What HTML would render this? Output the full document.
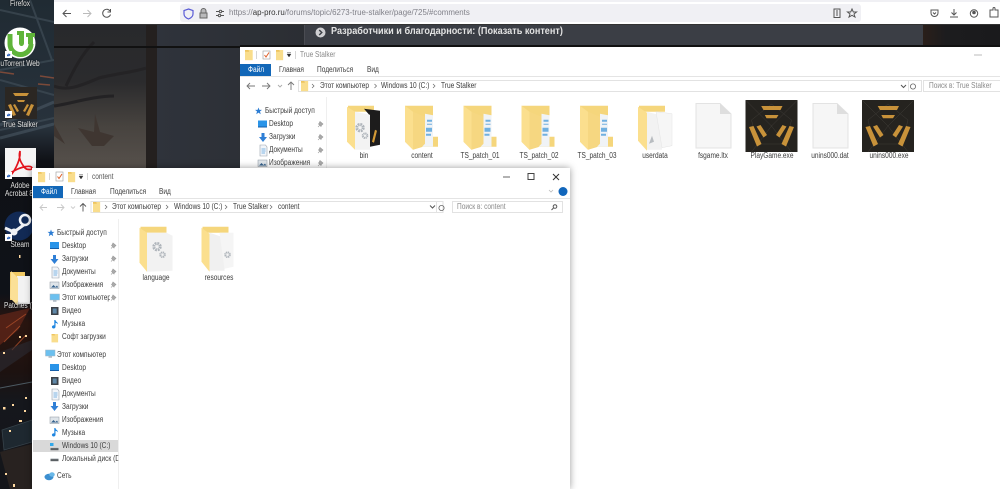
<!DOCTYPE html>
<html><head><meta charset="utf-8"><title>True Stalker</title>
<style>
html,body{margin:0;padding:0;width:1000px;height:489px;overflow:hidden;background:#fff}
#r{position:relative;width:1000px;height:489px;overflow:hidden;font-family:"Liberation Sans",sans-serif;filter:blur(.35px)}
.a{position:absolute}
.t{position:absolute;white-space:nowrap;font-size:7.8px;line-height:10px;height:10px;color:#3c3c3c;transform:scaleX(.84);transform-origin:0 50%}
.c{transform:translateX(-50%) scaleX(.84);transform-origin:50% 50%}
.d{color:#e4e4e4;text-shadow:0 0 2px #000}
.g{color:#8a8a8a}
svg{position:absolute;display:block;overflow:visible}
</style></head><body><div id="r">
<svg width="0" height="0" style="left:0;top:0">
<defs>
<g id="gear"><circle cx="0" cy="0" r="3.200" fill="none" stroke="#aeb4ba" stroke-width="3" stroke-dasharray="1.700 .8"/></g>
<g id="fc"><path d="M1 0H28V31H33V41H18L8 44L0 36V0Z" fill="#f5d67c"/><path d="M8 6L20 11V39L8 44Z" fill="#f6d781"/><path d="M20 8L28 9.500V41H17L20 38Z" fill="#f0f3f6"/><path d="M22 14H27V16H22ZM22 18H27V19H22ZM21 22H27V26H21ZM21 28H26V30H21Z" fill="#59a3dc" opacity=".85"/><path d="M0 0L8 6V44L0 36Z" fill="#fbdf8e"/></g>
<g id="fg"><path d="M1 0H27V6H1Z" fill="#f5d67c"/><path d="M7 6H27L33 9V44L7 45Z" fill="#f2f2f2"/><use href="#gear" x="17.500" y="20"/><use href="#gear" transform="translate(23 28) scale(.7)"/><path d="M0 1L7.500 6V45L0 36Z" fill="#fbdf8e"/></g>
<g id="exe"><rect width="52" height="52" fill="#25231f"/><path d="M0 0L26 26L52 0M26 26L6 52M26 26L46 52M26 4L46 20L40 44H12L6 20Z" fill="none" stroke="#3f3c37" stroke-width=".5"/><path d="M15.700 6H37L35 10H18ZM19.300 15H33L31 18.300H21ZM3.500 27L8 26L16 44L11.500 46.500ZM11 26.500L15 25L21.500 35L18 37.500ZM48.500 27L44 26L36 44L40.500 46.500ZM41 26.500L37 25L30.500 35L34 37.500Z" fill="#c8923a"/></g>
<g id="pg"><path d="M1 0H6.500L8 2V11H1Z" fill="#f2f5f9" stroke="#9aa3ad" stroke-width=".6"/><path d="M2.500 4H6.500M2.500 6H6.500M2.500 8H6" stroke="#5aa0dc" stroke-width=".7"/></g>
<g id="dl"><path d="M3 0H6V4H8.500L4.500 9L.5 4H3Z" fill="#2f7fd6"/></g>
<g id="dk"><rect width="9" height="6.500" fill="#2a94e8"/><rect y="6" width="9" height="1" fill="#155ea8"/></g>
<g id="im"><rect width="9" height="6.500" fill="#dfe5ea" stroke="#8a949e" stroke-width=".5"/><path d="M1 5.500L3.500 3L5.500 5L7 3.500L8.200 5.500Z" fill="#33608c"/></g>
<g id="pc"><rect width="9.500" height="6" fill="#6cc0ef" stroke="#a6b6c2" stroke-width=".5"/><rect x="3" y="6.200" width="3.500" height="1.500" fill="#a8b4be"/></g>
<g id="vd"><rect width="7.500" height="8" fill="#3d4248"/><rect x="1.700" y="1.500" width="4" height="5" fill="#5f88a8"/></g>
<g id="mu"><path d="M3.500 0V6.800A1.800 1.600 0 1 1 2.300 5.400V0H3.500C3.500 2 6.200 2 5.800 4.200C5 3.200 4.200 2.900 3.500 2.900Z" fill="#1f86e0"/></g>
<g id="pin"><path d="M2 0L5 2.500L3.300 4L3 5L.5 2.500L1 2ZM1.700 3.800L0 5.500" stroke="#999" stroke-width=".6" fill="#aaa"/></g>
<g id="fo"><path d="M0 0H11V12H0Z" fill="#f9dd8c"/><path d="M0 0H5L6 2H0Z" fill="#eec45f"/></g>
<g id="sh"><rect width="7" height="7" fill="#fff"/><path d="M2 5.500V3.500H3.500V2.300L5.700 3.900L3.500 5.500V4.500Z" fill="#1c58b8"/></g>
<g id="star"><path d="M3.500 0L4.400 2.400H7L5 3.900L5.700 6.700L3.500 5.100L1.300 6.700L2 3.900L0 2.400H2.600Z" fill="#2b7cd3"/></g>
<g id="drive"><rect y="3" width="8" height="2.200" fill="#5a5f63"/><rect y="2.200" width="8" height=".9" fill="#c8cdd1"/></g>
</defs></svg>

<!-- desktop wallpaper -->
<svg class="a" style="left:0;top:0;overflow:hidden" width="54" height="489" viewBox="0 0 54 489">
<defs><linearGradient id="w" x1="0" y1="0" x2="0" y2="1"><stop offset="0" stop-color="#202b33"/><stop offset=".26" stop-color="#28323c"/><stop offset=".33" stop-color="#0f1116"/><stop offset=".6" stop-color="#0f1218"/><stop offset=".66" stop-color="#2a1510"/><stop offset=".76" stop-color="#1d1210"/><stop offset=".82" stop-color="#15171c"/><stop offset="1" stop-color="#14151a"/></linearGradient></defs>
<rect width="54" height="489" fill="url(#w)"/>
<path d="M0 10L54 22M0 70L54 60M30 0L52 60M0 130L54 118M0 80L54 95" stroke="#3f4c56" stroke-width="2" opacity=".7"/>
<path d="M0 125L54 102M0 138L54 124" stroke="#51606c" stroke-width="3" opacity=".5"/>
<path d="M40 76L54 78M38 84L50 85M0 72L14 74" stroke="#a0553a" stroke-width="1.500" opacity=".7"/>
<path d="M0 315L30 308L18 330L0 345Z" fill="#6f2a1a" opacity=".6"/>
<path d="M6 328L26 314M4 342L20 326M12 350L26 335" stroke="#b8532c" stroke-width="1" opacity=".7"/>
<path d="M0 352L32 340V350L0 372Z" fill="#2c2c34" opacity=".6"/>
<path d="M2 430L32 420V442L4 450Z" fill="#202a33" opacity=".9" stroke="#3a474f" stroke-width=".8"/>
<path d="M0 452L32 444V489H10Z" fill="#2a2321" opacity=".9"/>
<path d="M0 388L32 382" stroke="#4c5a62" stroke-width="1"/>
<g fill="#ffd9a0"><rect x="19" y="420" width="3" height="2"/><rect x="3" y="407" width="2.500" height="2.500"/><rect x="12" y="404" width="2" height="2"/><rect x="25" y="397" width="2" height="2"/><rect x="3" y="352" width="2" height="2"/><rect x="19" y="336" width="2" height="2"/><rect x="24" y="410" width="2" height="2"/><rect x="5" y="473" width="2" height="2"/><rect x="13" y="484" width="2" height="3"/><rect x="9" y="430" width="2" height="2"/><rect x="19" y="255" width="1.500" height="3"/><rect x="25" y="335" width="2" height="2"/></g>
</svg>

<!-- desktop icons -->
<svg class="a" style="left:0;top:0" width="54" height="320" viewBox="0 0 54 320">
<circle cx="20" cy="43" r="15.500" fill="#fff"/>
<path d="M10 34V44A10.500 10.500 0 0 0 31 44" fill="none" stroke="#5fb43a" stroke-width="5"/>
<path d="M17 31H24V43C24 47 19 47 19 43V35H17ZM26 33H35V37H33V44H28V37H26Z" fill="#5fb43a"/>
<use href="#sh" x="5" y="51"/>
<rect x="5" y="87" width="32" height="32" fill="#2b2723"/>
<path d="M13 93H29L27 96H15ZM17 100H25L24 102H18ZM8 105L11 104L16 115L13 116ZM13 105L15 104L19 111L17 112ZM34 105L31 104L26 115L29 116ZM29 105L27 104L23 111L25 112Z" fill="#c8923a"/>
<use href="#sh" x="5" y="111"/>
<rect x="5" y="148" width="31" height="29" fill="#f5f5f5"/>
<path d="M20 151C18 158 21 163 25 168C27 170 32 170 32 168C31 165 22 166 12 172C8 175 8 178 10 176C14 172 19 163 20 155Z" fill="none" stroke="#e3141d" stroke-width="1.700"/>
<use href="#sh" x="5" y="172"/>
<circle cx="19" cy="226" r="14.500" fill="#122a55"/>
<path d="M5 228L14 232L25 224" fill="none" stroke="#f0f2f5" stroke-width="3"/>
<circle cx="25" cy="220" r="5" fill="#122a55" stroke="#f0f2f5" stroke-width="2.500"/>
<circle cx="14" cy="232" r="3.500" fill="#f0f2f5"/>
<use href="#sh" x="5" y="234"/>
<path d="M10 272H25V300H10Z" fill="#f0c862"/><path d="M17 276H30V304H17Z" fill="#f2f2f2"/><path d="M11 271L18 278V306L10 298Z" fill="#fbe097"/>
</svg>
<div class="t d c" style="left:20px;top:-1px">Firefox</div>
<div class="t d c" style="left:20px;top:59px">uTorrent Web</div>
<div class="t d c" style="left:20px;top:120px">True Stalker</div>
<div class="t d c" style="left:20px;top:181px">Adobe</div>
<div class="t d c" style="left:19px;top:189px">Acrobat 8</div>
<div class="t d c" style="left:20px;top:240px">Steam</div>
<div class="t d" style="left:4px;top:301px">Patches (</div>

<!-- browser page -->
<div class="a" style="left:54px;top:24px;width:946px;height:145px;background:#2a2d33"></div>
<svg class="a" style="left:54px;top:24px;overflow:hidden" width="92" height="145" viewBox="0 0 92 145">
<defs><linearGradient id="ph" x1="0" y1="0" x2="0" y2="1"><stop offset="0" stop-color="#28292c"/><stop offset=".4" stop-color="#2b2b2d"/><stop offset=".7" stop-color="#47433f"/><stop offset="1" stop-color="#57514c"/></linearGradient></defs>
<rect width="92" height="145" fill="url(#ph)"/>
<path d="M0 62C15 68 30 60 45 54C60 50 80 48 92 44" stroke="#242325" stroke-width="3" fill="none"/>
<path d="M12 62C20 45 28 30 40 18M0 82C15 80 40 72 60 72" stroke="#232224" stroke-width="3" fill="none"/>
<path d="M41 90L46 108L60 112L50 122L38 122L24 104L40 108Z" fill="#3f3631"/>
<path d="M0 100L11 120L0 112Z" fill="#3f3631"/>
</svg>
<div class="a" style="left:146px;top:24px;width:11px;height:145px;background:#24201f"></div>
<div class="a" style="left:157px;top:24px;width:148px;height:145px;background:linear-gradient(90deg,#2f333b,#2b2e33)"></div>
<div class="a" style="left:304px;top:24px;width:620px;height:22px;background:#3b3e45;border-left:1px solid #4a4c52"></div>
<div class="a" style="left:923px;top:24px;width:77px;height:22px;background:linear-gradient(90deg,#2a1f1a,#1c1c1e 30%,#1a1a1c)"></div>
<div class="a" style="left:54px;top:46px;width:186px;height:2px;background:#111"></div>
<div class="a" style="left:240px;top:45px;width:760px;height:2px;background:#111"></div>
<svg class="a" style="left:315px;top:27px" width="11" height="11"><circle cx="5.500" cy="5.500" r="5" fill="#cfcfd2"/><path d="M4.200 3L6.800 5.500L4.200 8" stroke="#3b3e45" stroke-width="1.400" fill="none"/></svg>
<div class="t" style="left:331px;top:26px;height:12px;line-height:12px;font-size:9.800px;font-weight:bold;color:#e2e2e2;transform:scaleX(.93)">Разработчики и благодарности: (Показать контент)</div>

<!-- browser toolbar -->
<div class="a" style="left:54px;top:0;width:946px;height:24px;background:#fff"></div>
<div class="a" style="left:54px;top:0;width:946px;height:2px;background:#f0f0f4"></div>
<div class="a" style="left:54px;top:23.500px;width:946px;height:1px;background:#333"></div>
<div class="a" style="left:180px;top:4px;width:681px;height:18px;background:#f0f0f4;border-radius:3px"></div>
<svg class="a" style="left:0;top:0" width="1000" height="24" viewBox="0 0 1000 24" fill="none" stroke="#555" stroke-width="1">
<path d="M71 13.500H63M66.500 10L63 13.500L66.500 17"/>
<path d="M83 13.500H91M87.500 10L91 13.500L87.500 17" stroke="#bbb"/>
<path d="M110 11A4 4 0 1 0 110.500 14.500M110.500 9V12H107.500"/>
<path d="M188.500 9L193 10.500V14C193 16.500 191 18 188.500 19C186 18 184 16.500 184 14V10.500Z" stroke="#5a5bd6" stroke-width="1.200"/>
<path d="M201 13V11A2.500 2.500 0 0 1 206 11V13M200 13H207V18H200Z" fill="#666" stroke="#666" fill-opacity=".4"/>
<path d="M216 11.500H219M222 11.500H224M216 15.500H218M221 15.500H224"/><circle cx="220.500" cy="11.500" r="1.200"/><circle cx="219.500" cy="15.500" r="1.200"/>
<rect x="834" y="9" width="6" height="8.500"/><path d="M836 11H838M836 13H838M836 15H838"/>
<path d="M852 9L853.300 12H856.500L854 14L855 17L852 15.300L849 17L850 14L847.500 12H850.700Z"/>
<path d="M931 10H938V13A3.500 3.500 0 0 1 931 13ZM933 12.500L934.500 14L936 12.500"/>
<path d="M954 9V15M951.500 12.500L954 15L956.500 12.500M950 17H958"/>
<circle cx="974" cy="13.500" r="3.700"/><circle cx="974" cy="12.500" r="1.300" fill="#555"/>
<path d="M990 10H993V8.500A1 1 0 0 1 995 8.500V10H998V17H990Z"/>
</svg>
<div class="t" style="left:229px;top:8px;font-size:7.900px;color:#808088;transform:none">https://<span style="color:#333">ap-pro.ru</span>/forums/topic/6273-true-stalker/page/725/#comments</div>

<!-- back explorer -->
<div class="a" style="left:240px;top:47px;width:760px;height:442px;background:#fff"></div>
<svg class="a" style="left:0;top:0" width="1000" height="170" viewBox="0 0 1000 170">
<use href="#fo" transform="translate(245 50) scale(.7 .85)"/>
<path d="M256.500 51V59" stroke="#bbb" stroke-width=".6"/>
<rect x="263" y="51" width="7" height="8" fill="#fff" stroke="#999" stroke-width=".6"/><path d="M264.500 55L266 57L269 52.500" stroke="#e0602a" fill="none"/>
<use href="#fo" transform="translate(276 50) scale(.65 .85)"/>
<path d="M287 54H291L289 57ZM287 52.500H291" fill="#333" stroke="#333" stroke-width=".4"/>
<path d="M295.500 51V59" stroke="#bbb" stroke-width=".6"/>
<rect x="240" y="64" width="31" height="12" fill="#1267b8"/>
<path d="M240 76.500H1000" stroke="#e4e4e4" stroke-width="1"/>
<path d="M974 55H982" stroke="#bbb"/>
<g fill="none" stroke="#777" stroke-width=".9">
<path d="M255 86H247M250 83L247 86L250 89"/>
<path d="M262 86H270M267 83L270 86L267 89"/>
<path d="M278 85L280 87L282 85" stroke="#aaa"/>
<path d="M291 90V82M288 85L291 82L294 85"/>
</g>
<rect x="298.500" y="80.500" width="623" height="11" fill="#fff" stroke="#e2e2e2"/>
<use href="#fo" transform="translate(301 81) scale(.65 .85)"/>
<path d="M312 84L314 86L312 88M374.500 84L376.500 86L374.500 88M433 84L435 86L433 88" fill="none" stroke="#666" stroke-width=".7"/>
<path d="M901 85L903.500 87.500L906 85" fill="none" stroke="#555"/>
<path d="M908.500 81V91" stroke="#e2e2e2"/>
<circle cx="913" cy="86.500" r="2.600" fill="none" stroke="#666" stroke-width=".8"/>
<rect x="923.500" y="80.500" width="80" height="11" fill="#fff" stroke="#e2e2e2"/>
<path d="M326.500 97V170" stroke="#efefef"/>
<use href="#star" x="255" y="107.500"/>
<use href="#dk" x="258" y="120.500"/><use href="#dl" x="258.500" y="133"/><use href="#pg" x="259" y="145"/><use href="#im" x="258" y="160"/>
<use href="#pin" x="318" y="121.500"/><use href="#pin" x="318" y="134.500"/><use href="#pin" x="318" y="147.500"/><use href="#pin" x="318" y="160.500"/>
<g transform="translate(347 105.700)"><path d="M1 0H27V6H1Z" fill="#f5d67c"/><path d="M17 3L33 5V39L23 41V10Z" fill="#1d1c1c"/><path d="M25 36L28 24L30 25L27 37Z" fill="#d39a36"/><path d="M8 6L23 9V44H8Z" fill="#f3f3f3"/><use href="#gear" x="13" y="22"/><use href="#gear" transform="translate(18 30) scale(.7)"/><path d="M0 1L8 6V44L0 36Z" fill="#fbdf8e"/></g>
<use href="#fc" x="405" y="105.700"/>
<use href="#fc" x="463.500" y="105.700"/>
<use href="#fc" x="521.500" y="105.700"/>
<use href="#fc" x="580" y="105.700"/>
<g transform="translate(638 105.700)"><path d="M1 0H27V6H1Z" fill="#f5d67c"/><path d="M9 6L24 10V44H9Z" fill="#f2f2f2"/><path d="M18 6L34 8V40L24 42Z" fill="#f6f6f6" stroke="#e4e4e4" stroke-width=".5"/><path d="M14 30L11 38L16 36Z" fill="#b8bcc0"/><path d="M0 1L9 7V45L0 35Z" fill="#fbdf8e"/></g>
<path d="M696 103.500H720L731 114V148H696Z" fill="#f6f6f6" stroke="#e3e3e3"/><path d="M720 103.500V114H731Z" fill="#dedede"/>
<g transform="translate(117 0)"><path d="M696 103.500H720L731 114V148H696Z" fill="#f6f6f6" stroke="#e3e3e3"/><path d="M720 103.500V114H731Z" fill="#dedede"/></g>
<use href="#exe" x="745.500" y="100"/>
<use href="#exe" x="862" y="100"/>
</svg>
<div class="t g" style="left:300px;top:50px">True Stalker</div>
<div class="t" style="left:248px;top:65px;color:#fff">Файл</div>
<div class="t" style="left:279px;top:65px">Главная</div>
<div class="t" style="left:317px;top:65px">Поделиться</div>
<div class="t" style="left:367px;top:65px">Вид</div>
<div class="t" style="left:320px;top:81px">Этот компьютер</div>
<div class="t" style="left:381px;top:81px">Windows 10 (C:)</div>
<div class="t" style="left:441px;top:81px">True Stalker</div>
<div class="t g" style="left:929px;top:81px">Поиск в: True Stalker</div>
<div class="t" style="left:265px;top:106px">Быстрый доступ</div>
<div class="t" style="left:269px;top:119px">Desktop</div>
<div class="t" style="left:269px;top:132px">Загрузки</div>
<div class="t" style="left:269px;top:145px">Документы</div>
<div class="t" style="left:269px;top:158px">Изображения</div>
<div class="t c" style="left:364px;top:151px">bin</div>
<div class="t c" style="left:422px;top:151px">content</div>
<div class="t c" style="left:480px;top:151px">TS_patch_01</div>
<div class="t c" style="left:539px;top:151px">TS_patch_02</div>
<div class="t c" style="left:597px;top:151px">TS_patch_03</div>
<div class="t c" style="left:655px;top:151px">userdata</div>
<div class="t c" style="left:713px;top:151px">fsgame.ltx</div>
<div class="t c" style="left:772px;top:151px">PlayGame.exe</div>
<div class="t c" style="left:830px;top:151px">unins000.dat</div>
<div class="t c" style="left:889px;top:151px">unins000.exe</div>

<!-- front explorer -->
<div class="a" style="left:32px;top:168px;width:538px;height:321px;background:#fff;box-shadow:0 0 7px rgba(0,0,0,.4)"></div>
<div class="a" style="left:33px;top:440px;width:85px;height:12px;background:#d9d9d9"></div>
<svg class="a" style="left:0;top:160px" width="600" height="329" viewBox="0 160 600 329">
<use href="#fo" transform="translate(38 172) scale(.65 .85)"/>
<path d="M49.500 173V180" stroke="#bbb" stroke-width=".6"/>
<rect x="56" y="172" width="7" height="9" fill="#fff" stroke="#999" stroke-width=".6"/><path d="M57.500 176.500L59 178.500L62 174" stroke="#e0602a" fill="none"/>
<use href="#fo" transform="translate(68 172) scale(.65 .85)"/>
<path d="M79 176H83L81 179ZM79 174.500H83" fill="#333" stroke="#333" stroke-width=".4"/>
<path d="M87.500 173V180" stroke="#bbb" stroke-width=".6"/>
<rect x="33" y="186" width="30" height="12" fill="#1267b8"/>
<path d="M33 198.500H570" stroke="#e4e4e4"/>
<path d="M503 177H510" stroke="#666" stroke-width="1"/>
<rect x="528" y="173.500" width="6" height="6" fill="none" stroke="#444"/>
<path d="M553 174L559 180M559 174L553 180" stroke="#333" stroke-width="1"/>
<path d="M549 190L551 192L553 190" fill="none" stroke="#bbb" stroke-width=".8"/>
<circle cx="563" cy="191.500" r="4.500" fill="#1166bb"/>
<g fill="none" stroke-width=".9">
<path d="M47 207.500H40M43 204.500L40 207.500L43 210.500" stroke="#c8c8c8"/>
<path d="M57 207.500H64M61 204.500L64 207.500L61 210.500" stroke="#c8c8c8"/>
<path d="M71 206.500L73 208.500L75 206.500" stroke="#ccc"/>
<path d="M83 211.500V203.500M80 206.500L83 203.500L86 206.500" stroke="#555"/>
</g>
<rect x="91" y="201.500" width="352" height="11" fill="#fff" stroke="#e2e2e2"/>
<use href="#fo" transform="translate(93 202) scale(.65 .85)"/>
<path d="M105 205L107 207L105 209M166 205L168 207L166 209M225 205L227 207L225 209M270 205L272 207L270 209" fill="none" stroke="#666" stroke-width=".7"/>
<path d="M430 205.500L432.500 208L435 205.500" fill="none" stroke="#555"/>
<path d="M436.500 202V212" stroke="#e2e2e2"/>
<circle cx="441.500" cy="208" r="2.600" fill="none" stroke="#666" stroke-width=".8"/>
<rect x="452.500" y="201.500" width="110" height="11" fill="#fff" stroke="#e2e2e2"/>
<circle cx="555" cy="206.500" r="1.800" fill="none" stroke="#555"/><path d="M553.500 208L551.500 210" stroke="#555"/>
<path d="M118.500 219V489" stroke="#efefef"/>
<use href="#star" x="47.500" y="229.500"/>
<use href="#dk" x="50" y="242"/><use href="#dl" x="50" y="255"/><use href="#pg" x="51" y="267"/><use href="#im" x="50" y="282"/><use href="#pc" x="50" y="294"/><use href="#vd" x="51" y="307"/><use href="#mu" x="52" y="320"/><use href="#fo" transform="translate(51.500 334) scale(.6 .7)"/>
<use href="#pc" x="45.500" y="350"/>
<use href="#dk" x="50" y="364"/><use href="#vd" x="51" y="377"/><use href="#pg" x="51" y="389"/><use href="#dl" x="50" y="402"/><use href="#im" x="50" y="417"/><use href="#mu" x="52" y="428"/>
<path d="M50 443H53.500V446H50Z" fill="#31a8ea"/><use href="#drive" x="50.500" y="445"/><use href="#drive" x="50.500" y="456"/>
<ellipse cx="49" cy="477" rx="4.500" ry="3.200" fill="#3c8fd0"/><ellipse cx="52" cy="474.500" rx="2.800" ry="2.200" fill="#6ab8e8"/>
<use href="#pin" x="111" y="243"/><use href="#pin" x="111" y="256"/><use href="#pin" x="111" y="269"/><use href="#pin" x="111" y="282"/><use href="#pin" x="111" y="295"/>
<use href="#fg" x="139.500" y="226.700"/>
<g transform="translate(201.500 226.700)"><path d="M1 0H27V6H1Z" fill="#f5d67c"/><path d="M8 6L23 11V44H8Z" fill="#f0f0f0"/><path d="M18 6L32 6V40L23 42Z" fill="#f5f5f5"/><use href="#gear" transform="translate(26 28) scale(.7)"/><path d="M0 1L8 7V45L0 35Z" fill="#fbdf8e"/></g>
</svg>
<div class="t" style="left:92px;top:172px;color:#555">content</div>
<div class="t" style="left:41px;top:187px;color:#fff">Файл</div>
<div class="t" style="left:71px;top:187px">Главная</div>
<div class="t" style="left:110px;top:187px">Поделиться</div>
<div class="t" style="left:159px;top:187px">Вид</div>
<div class="t" style="left:112px;top:202px">Этот компьютер</div>
<div class="t" style="left:174px;top:202px">Windows 10 (C:)</div>
<div class="t" style="left:233px;top:202px">True Stalker</div>
<div class="t" style="left:278px;top:202px">content</div>
<div class="t g" style="left:457px;top:202px">Поиск в: content</div>
<div class="t" style="left:57px;top:228px">Быстрый доступ</div>
<div class="t" style="left:61.500px;top:241px">Desktop</div>
<div class="t" style="left:61.500px;top:254px">Загрузки</div>
<div class="t" style="left:61.500px;top:267px">Документы</div>
<div class="t" style="left:61.500px;top:280px">Изображения</div>
<div class="t" style="left:61.500px;top:293px;width:57px;overflow:hidden">Этот компьютер</div>
<div class="t" style="left:61.500px;top:306px">Видео</div>
<div class="t" style="left:61.500px;top:319px">Музыка</div>
<div class="t" style="left:61.500px;top:332px">Софт загрузки</div>
<div class="t" style="left:57px;top:350px">Этот компьютер</div>
<div class="t" style="left:61.500px;top:363px">Desktop</div>
<div class="t" style="left:61.500px;top:376px">Видео</div>
<div class="t" style="left:61.500px;top:389px">Документы</div>
<div class="t" style="left:61.500px;top:402px">Загрузки</div>
<div class="t" style="left:61.500px;top:415px">Изображения</div>
<div class="t" style="left:61.500px;top:428px">Музыка</div>
<div class="t" style="left:61.500px;top:441px">Windows 10 (C:)</div>
<div class="t" style="left:61.500px;top:454px;width:67px;overflow:hidden">Локальный диск (D:)</div>
<div class="t" style="left:57px;top:471px">Сеть</div>
<div class="t c" style="left:156px;top:273px">language</div>
<div class="t c" style="left:219px;top:273px">resources</div>
</div></body></html>
